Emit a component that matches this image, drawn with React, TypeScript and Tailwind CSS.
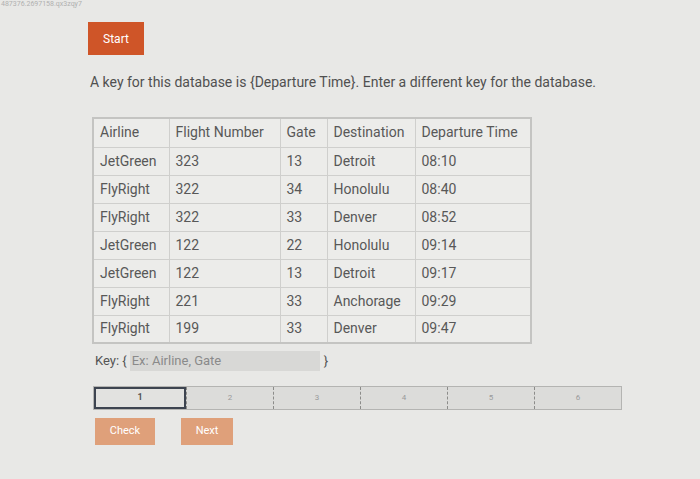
const rows = [
  ["JetGreen", "323", "13", "Detroit", "08:10"],
  ["FlyRight", "322", "34", "Honolulu", "08:40"],
  ["FlyRight", "322", "33", "Denver", "08:52"],
  ["JetGreen", "122", "22", "Honolulu", "09:14"],
  ["JetGreen", "122", "13", "Detroit", "09:17"],
  ["FlyRight", "221", "33", "Anchorage", "09:29"],
  ["FlyRight", "199", "33", "Denver", "09:47"],
];

const headers = ["Airline", "Flight Number", "Gate", "Destination", "Departure Time"];
const widths = ["w-[76px]", "w-[111px]", "w-[47px]", "w-[88px]", "w-[116px]"];

export default function App() {
  return (
    <div className="h-[479px] w-[700px] overflow-hidden bg-[#e8e8e6] font-['Roboto',sans-serif] text-[#4a4a4a]">
      <div className="h-[16px] pl-[1px] pt-[1px] text-[7px] leading-none text-[#b0b0b0]">
        487376.2697158.qx3zqy7
      </div>

      <div className="pl-[88px] pt-[6px]">
        <button className="h-[33px] w-[56px] bg-[#cf5528] text-[12px] text-white">Start</button>
      </div>

      <p className="pl-[90px] pt-[19px] text-[14px] leading-[16px] text-[#505050]">
        A key for this database is {"{"}Departure Time{"}"}. Enter a different key for the database.
      </p>

      <div className="pl-[92px] pt-[27px]">
        <table className="border-collapse border-2 border-[#c4c4c2] bg-[#ececea] text-[14px] text-[#585858]">
          <thead>
            <tr className="h-[29px]">
              {headers.map((h, i) => (
                <th
                  key={h}
                  className={`border border-[#cfcfcd] px-[6px] text-left font-normal ${widths[i]}`}
                >
                  {h}
                </th>
              ))}
            </tr>
          </thead>
          <tbody>
            {rows.map((r, ri) => (
              <tr key={ri} className="h-[28px]">
                {r.map((c, ci) => (
                  <td key={ci} className="border border-[#cfcfcd] px-[6px]">
                    {c}
                  </td>
                ))}
              </tr>
            ))}
          </tbody>
        </table>
      </div>

      <div className="flex items-center pl-[95px] pt-[7px] text-[13px] text-[#555]">
        <span className="mr-[3px]">Key: {"{"}</span>
        <div className="flex h-[20px] w-[190px] items-center bg-[#d8d8d6] px-[2px] text-[#8a8a8a]">
          Ex: Airline, Gate
        </div>
        <span className="ml-[4px]">{"}"}</span>
      </div>

      <div className="pl-[93px] pt-[15px]">
        <div className="flex h-[24px] w-[529px] border border-[#b4b4b2] bg-[#dcdcda] text-[8px] text-[#9a9a9a]">
          <div className="flex w-[92px] items-center justify-center border-2 border-[#3d4450] bg-[#e2e2e0] text-[9px] font-bold text-[#555]">
            1
          </div>
          {["2", "3", "4", "5", "6"].map((n) => (
            <div
              key={n}
              className="flex flex-1 items-center justify-center border-l border-dashed border-[#8c8c8a]"
            >
              {n}
            </div>
          ))}
        </div>
      </div>

      <div className="flex gap-[26px] pl-[95px] pt-[8px]">
        <button className="h-[27px] w-[60px] bg-[#dfa07a] text-[11px] text-white">Check</button>
        <button className="h-[27px] w-[52px] bg-[#dfa07a] text-[11px] text-white">Next</button>
      </div>
    </div>
  );
}
